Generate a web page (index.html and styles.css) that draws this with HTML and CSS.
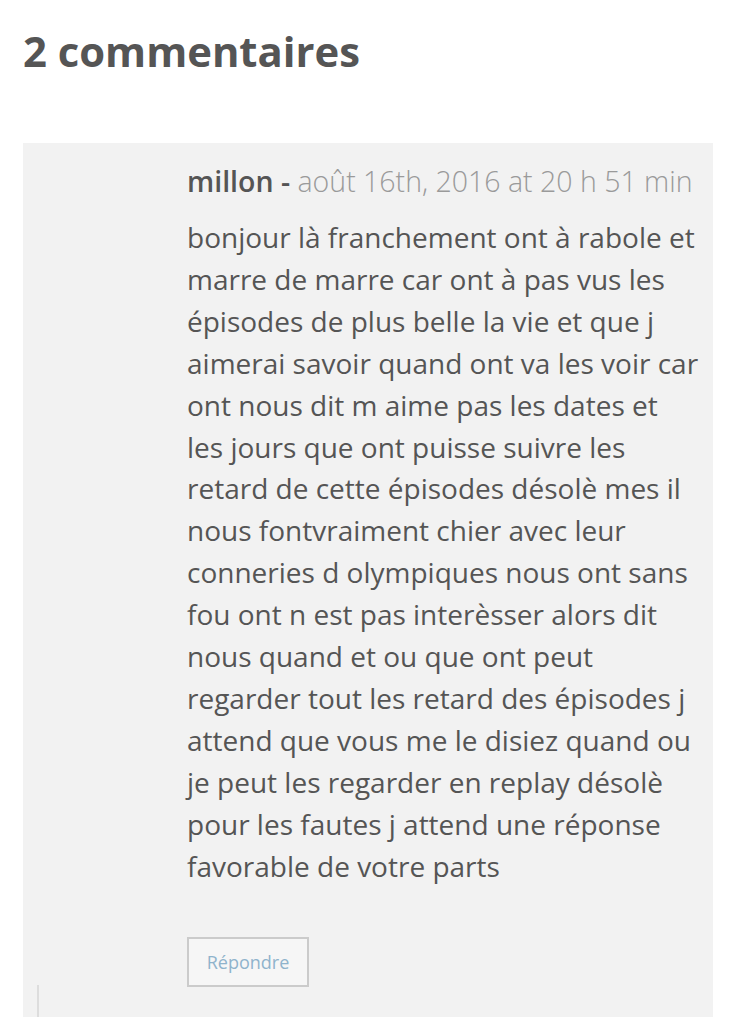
FILE: index.html
```html
<!DOCTYPE html>
<html lang="fr">
<head>
<meta charset="utf-8">
<link rel="stylesheet" href="styles.css">
</head>
<body>
<section class="comments">
  <h2 class="comments-title">2 commentaires</h2>
  <div class="comment">
    <div class="comment-body">
      <p class="comment-meta"><span class="author">millon</span> <span class="dash">-</span> <span class="date">août 16th, 2016 at 20 h 51 min</span></p>
      <p class="comment-text">bonjour là franchement ont à rabole et marre de marre car ont à pas vus les épisodes de plus belle la vie et que j aimerai savoir quand ont va les voir car ont nous dit m aime pas les dates et les jours que ont puisse suivre les retard de cette épisodes désolè mes il nous fontvraiment chier avec leur conneries d olympiques nous ont sans fou ont n est pas interèsser alors dit nous quand et ou que ont peut regarder tout les retard des épisodes j attend que vous me le disiez quand ou je peut les regarder en replay désolè pour les fautes j attend une réponse favorable de votre parts</p>
      <a class="reply" href="#">Répondre</a>
    </div>
    <div class="child"></div>
  </div>
</section>
</body>
</html>
```
FILE: styles.css
```css
html, body {
  margin: 0;
  padding: 0;
  background: #fff;
}
body {
  font-family: "Open Sans", "Liberation Sans", sans-serif;
  color: #555;
  overflow: hidden;
  height: 1017px;
}
.comments {
  padding: 0 35px 0 23px;
}
.comments-title {
  margin: 0;
  padding-top: 25px;
  font-size: 41.8px;
  font-weight: 700;
  line-height: 52px;
  color: #555;
  height: 118px;
}
.comment {
  background: #f2f2f2;
  padding: 0 0 0 14px;
}
.comment-body {
  padding: 20px 0 0 150px;
}
.comment-meta {
  margin: 0;
  font-size: 28.5px;
  line-height: 36px;
  white-space: nowrap;
}
.author {
  font-weight: 600;
  color: #555;
}
.dash {
  font-weight: 600;
  color: #555;
}
.date {
  font-weight: 300;
  color: #9a9a9a;
}
.comment-text {
  margin: 18px 0 0;
  max-width: 512.5px;
  font-size: 28px;
  line-height: 41.9px;
  color: #555;
}
.reply {
  display: inline-block;
  margin-top: 49px;
  width: 118px;
  height: 46px;
  line-height: 46px;
  text-align: center;
  border: 2px solid #cbcbcb;
  background: #f6f6f6;
  color: #8fb3cc;
  font-size: 18px;
  text-decoration: none;
}
.child {
  margin-top: -2px;
  height: 40px;
  border-left: 2px solid #ddd;
}
```
